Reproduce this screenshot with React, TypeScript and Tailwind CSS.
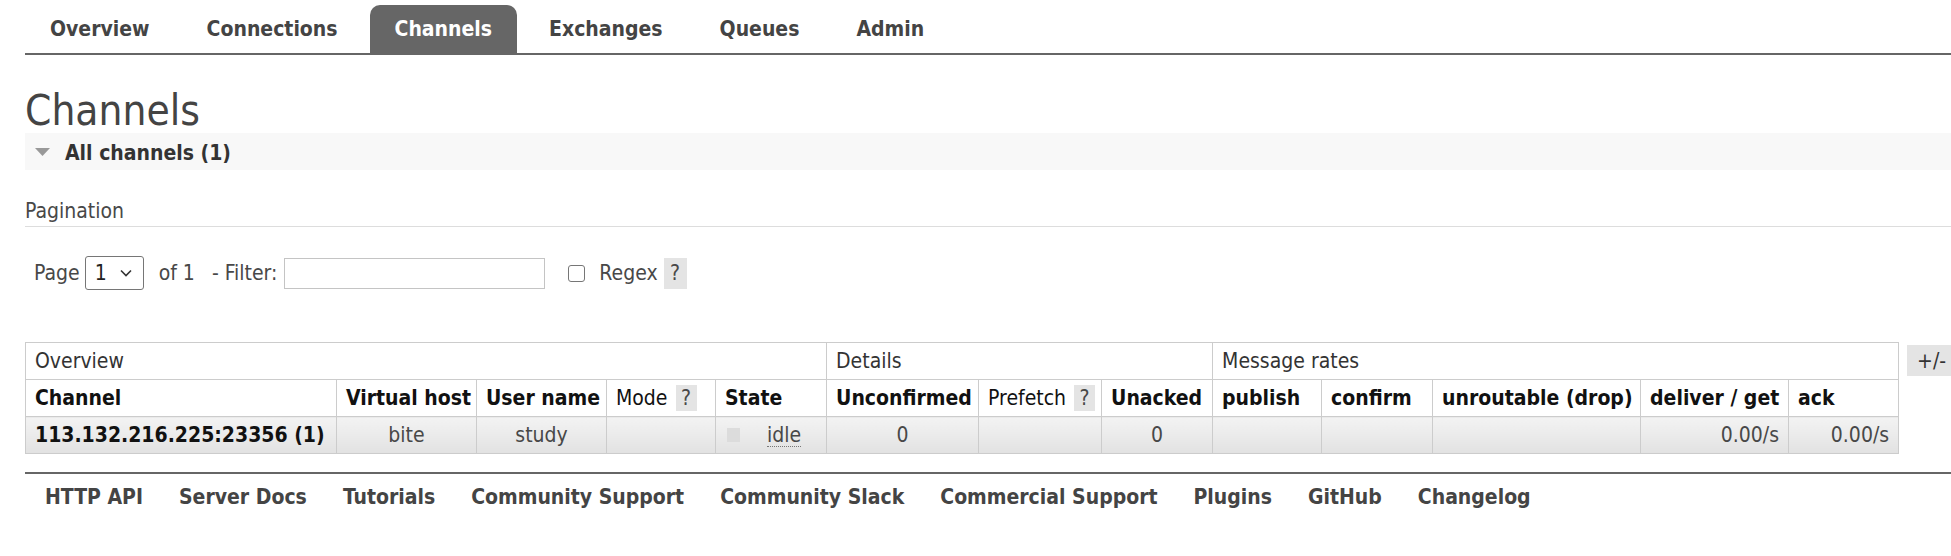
const tabs = ["Overview", "Connections", "Channels", "Exchanges", "Queues", "Admin"];

const footerLinks = [
  "HTTP API",
  "Server Docs",
  "Tutorials",
  "Community Support",
  "Community Slack",
  "Commercial Support",
  "Plugins",
  "GitHub",
  "Changelog",
];

const colWidths = [311, 140, 130, 109, 111, 152, 123, 111, 109, 111, 208, 148, 110];

function HelpTip({ className = "" }: { className?: string }) {
  return (
    <span
      className={`inline-flex items-center justify-center bg-[#e4e4e4] font-normal text-[#484848] ${className}`}
    >
      ?
    </span>
  );
}

const thCls = "whitespace-nowrap border border-[#ccc] pl-[9px] pr-[4px] py-[6px] text-left align-middle";
const tdCls =
  "whitespace-nowrap border border-[#ccc] bg-gradient-to-b from-[#f3f3f3] to-[#e2e2e2] px-[9px] py-[6px] align-middle";

export default function App() {
  return (
    <div className="min-h-[556px] w-full overflow-hidden bg-white font-[family-name:DejaVu_Sans_Condensed,Liberation_Sans,sans-serif] text-[21px] leading-[24px] text-[#484848]">
      {/* top menu */}
      <nav className="ml-[25px] border-b-2 border-[#666] pt-[5px]">
        <ul className="flex gap-[7px]">
          {tabs.map((t) => (
            <li
              key={t}
              className={
                t === "Channels"
                  ? "flex h-[48px] items-center rounded-t-[10px] bg-[#666] px-[25px] font-bold text-white"
                  : "flex h-[48px] items-center px-[25px] font-bold text-[#444]"
              }
            >
              {t}
            </li>
          ))}
        </ul>
      </nav>

      <main className="ml-[25px]">
        <h1 className="mt-[34px] h-[44px] text-[42px] font-normal leading-[44px] text-[#444]">Channels</h1>

        <div className="flex h-[37px] items-center bg-[#f8f8f8] pl-[10px]">
          <svg width="15" height="8" viewBox="0 0 15 8" className="mt-[1px]">
            <polygon points="0,0 15,0 7.5,8" fill="#999" />
          </svg>
          <span className="ml-[15px] pt-[2px] font-bold text-[#333]">All channels (1)</span>
        </div>

        <div className="mt-[29px] border-b border-[#ddd] pb-[3px]">Pagination</div>

        <div className="mt-[29px] flex h-[34px] items-center pl-[9px]">
          <span>Page</span>
          <div className="ml-[5px] flex h-[34px] w-[59px] items-center justify-between rounded-[3px] border border-[#767676] bg-white pl-[9px] pr-[11px] text-[#222]">
            <span>1</span>
            <svg width="12" height="8" viewBox="0 0 12 8">
              <polyline points="1,1.5 6,6.5 11,1.5" fill="none" stroke="#333" strokeWidth="1.6" />
            </svg>
          </div>
          <span className="ml-[15px]">of 1</span>
          <span className="ml-[17px]">- Filter:</span>
          <input
            type="text"
            aria-label="Filter"
            className="ml-[7px] h-[31px] w-[261px] border border-[#c4c4c4] bg-white"
          />
          <span className="ml-[23px] h-[17px] w-[17px] rounded-[3px] border border-[#767676] bg-white" />
          <span className="ml-[14px]">Regex</span>
          <HelpTip className="ml-[6px] h-[31px] w-[23px]" />
        </div>

        <div className="mt-[52px] flex items-start">
          <table className="w-[1873px] shrink-0 table-fixed border-collapse">
            <colgroup>
              {colWidths.map((w, i) => (
                <col key={i} style={{ width: w }} />
              ))}
            </colgroup>
            <thead>
              <tr className="bg-white">
                <th colSpan={5} className={`${thCls} font-normal text-[#333]`}>
                  Overview
                </th>
                <th colSpan={3} className={`${thCls} font-normal text-[#333]`}>
                  Details
                </th>
                <th colSpan={5} className={`${thCls} font-normal text-[#333]`}>
                  Message rates
                </th>
              </tr>
              <tr className="bg-white text-[#111]">
                <th className={`${thCls} font-bold`}>Channel</th>
                <th className={`${thCls} font-bold`}>Virtual host</th>
                <th className={`${thCls} font-bold`}>User name</th>
                <th className={`${thCls} font-normal`}>
                  <span className="flex h-[24px] items-center">
                    Mode
                    <HelpTip className="ml-[8px] h-[26px] w-[21px]" />
                  </span>
                </th>
                <th className={`${thCls} font-bold`}>State</th>
                <th className={`${thCls} font-bold`}>Unconfirmed</th>
                <th className={`${thCls} font-normal`}>
                  <span className="flex h-[24px] items-center">
                    Prefetch
                    <HelpTip className="ml-[8px] h-[26px] w-[21px]" />
                  </span>
                </th>
                <th className={`${thCls} font-bold`}>Unacked</th>
                <th className={`${thCls} font-bold`}>publish</th>
                <th className={`${thCls} font-bold`}>confirm</th>
                <th className={`${thCls} font-bold`}>unroutable (drop)</th>
                <th className={`${thCls} font-bold`}>deliver / get</th>
                <th className={`${thCls} font-bold`}>ack</th>
              </tr>
            </thead>
            <tbody>
              <tr>
                <td className={`${tdCls} font-bold text-[#111]`}>113.132.216.225:23356 (1)</td>
                <td className={`${tdCls} text-center`}>bite</td>
                <td className={`${tdCls} text-center`}>study</td>
                <td className={tdCls} />
                <td className={tdCls}>
                  <span className="flex items-center">
                    <span className="ml-[2px] h-[14px] w-[13px] bg-[#dcdcdc]" />
                    <span className="ml-[27px] border-b border-dotted border-[#777] leading-[22px]">idle</span>
                  </span>
                </td>
                <td className={`${tdCls} text-center`}>0</td>
                <td className={tdCls} />
                <td className={`${tdCls} text-center`}>0</td>
                <td className={tdCls} />
                <td className={tdCls} />
                <td className={tdCls} />
                <td className={`${tdCls} text-right`}>0.00/s</td>
                <td className={`${tdCls} text-right`}>0.00/s</td>
              </tr>
            </tbody>
          </table>
          <div className="ml-[8px] mt-[3px] flex h-[31px] w-[48px] shrink-0 items-center bg-[#e4e4e4] pl-[10px] text-[#333]">
            +/-
          </div>
        </div>
      </main>

      <footer className="ml-[25px] mt-[18px] border-t-2 border-[#666] pt-[11px]">
        <ul className="flex gap-[36px] pl-[20px]">
          {footerLinks.map((l) => (
            <li key={l} className="font-bold text-[#444]">
              {l}
            </li>
          ))}
        </ul>
      </footer>
    </div>
  );
}
